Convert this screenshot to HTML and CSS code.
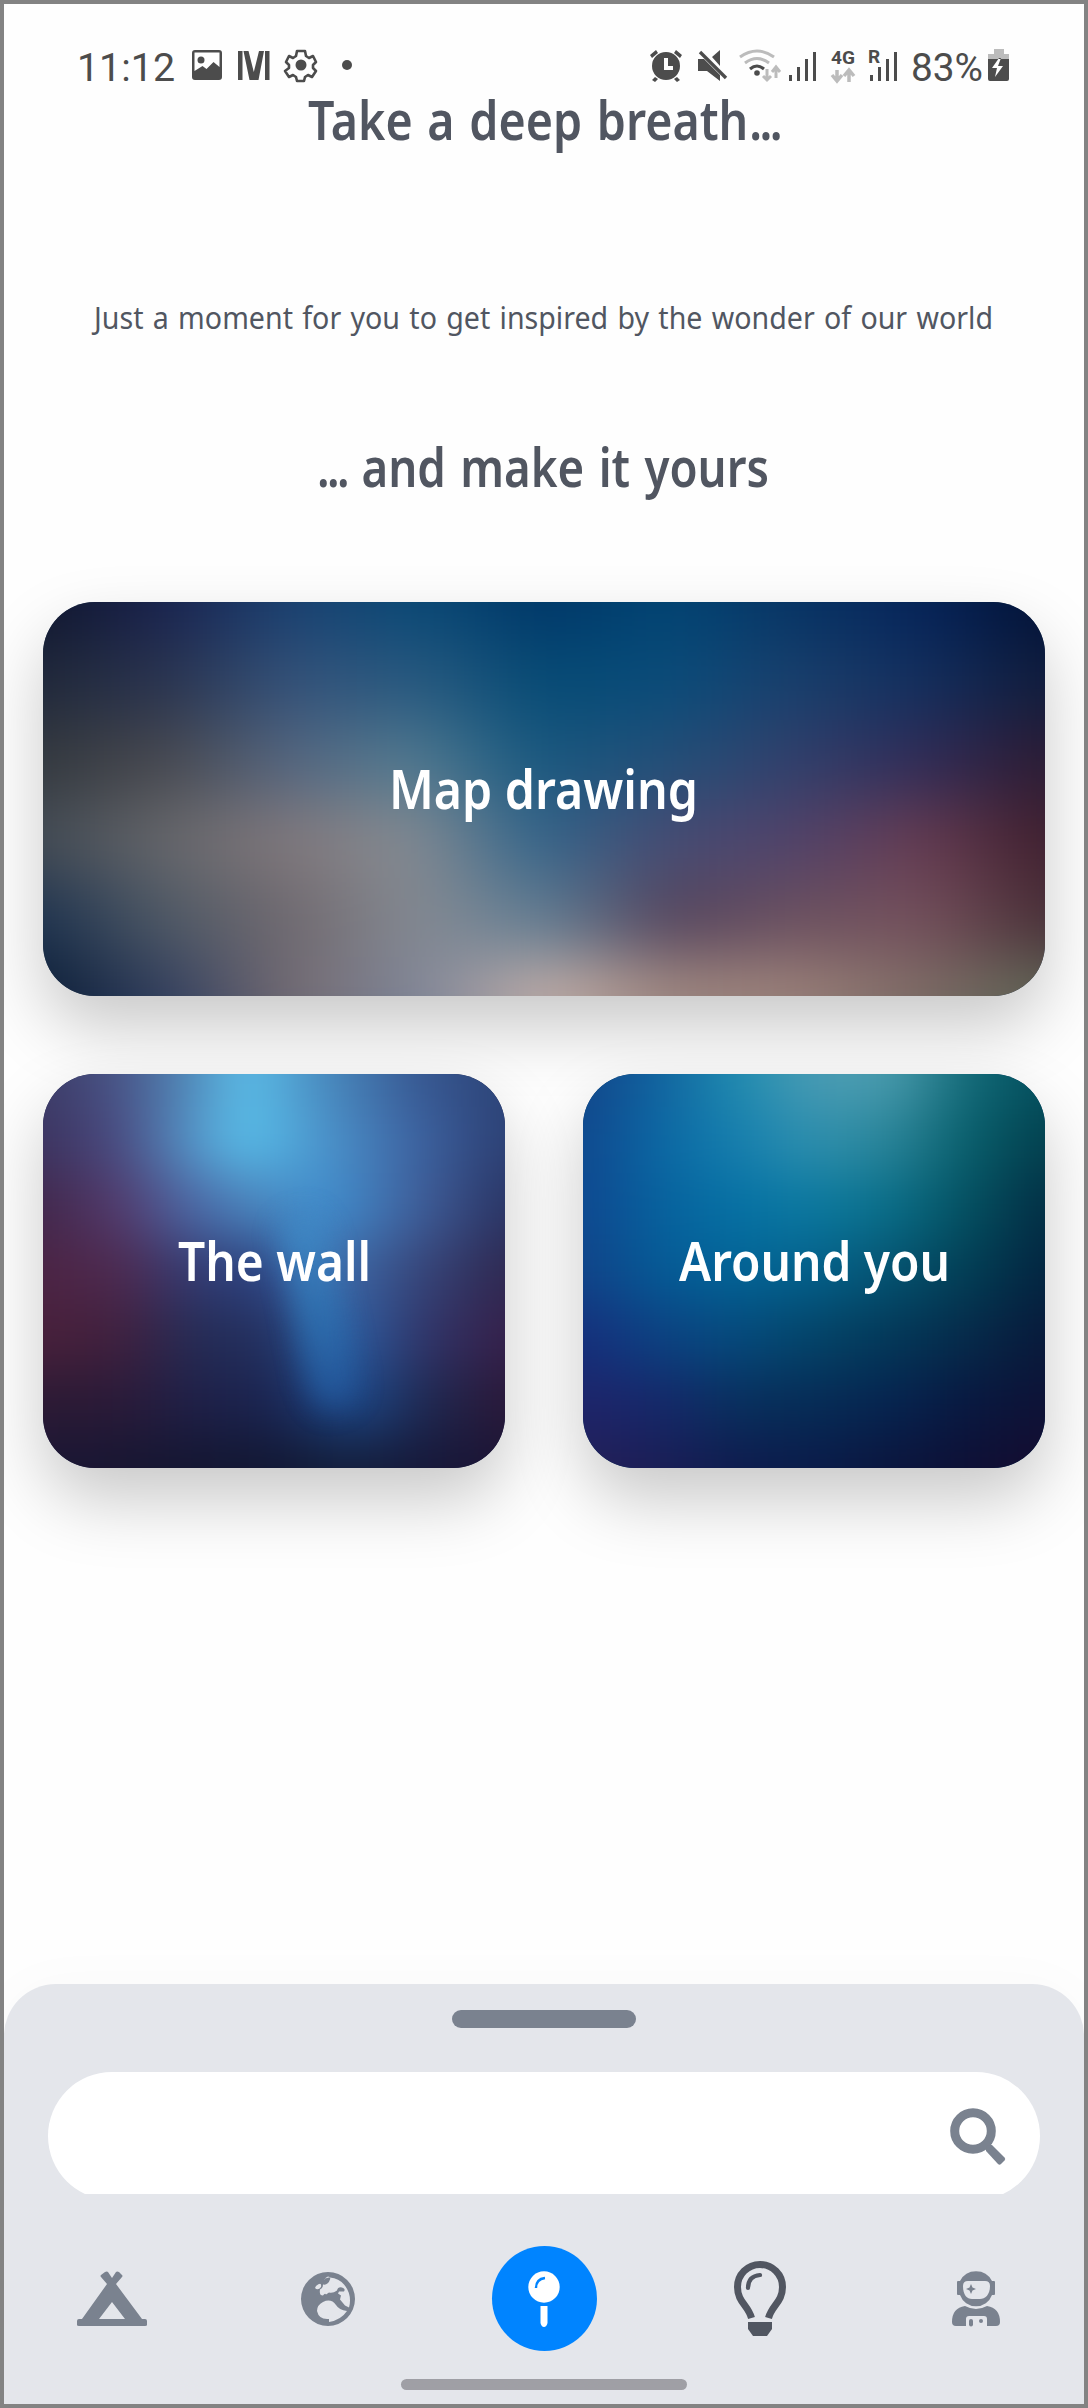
FILE: index.html
```html
<!DOCTYPE html>
<html lang="en">
<head>
<meta charset="utf-8">
<title>Take a deep breath</title>
<link rel="stylesheet" href="styles.css">
</head>
<body>
<div class="screen">
  <header class="status">
    <div class="status-left">
      <svg class="clock" width="99" height="36"><text x="0" y="32" textLength="98" lengthAdjust="spacingAndGlyphs">11:12</text></svg>
      <svg width="32" height="36" viewBox="0 0 32 36"><path fill-rule="evenodd" d="M4 1h24a3 3 0 0 1 3 3v24a3 3 0 0 1-3 3H4a3 3 0 0 1-3-3V4a3 3 0 0 1 3-3zM3.500 3.500V22l8-5 4 3 7-7 6 5V3.500z"/><circle cx="10" cy="11" r="3.500"/></svg>
      <svg width="32" height="36" viewBox="0 0 32 36"><path d="M0 2h4.500v29H0zM27 2h4.500v29H27zM5.500 2h5l5.300 21L21 2h5l-5.500 29h-9z"/></svg>
      <svg width="32" height="36" viewBox="0 0 32 36"><path fill="none" stroke="#4c4c4c" stroke-width="2.600" stroke-linejoin="round" d="M12 2h8l1 5 3 2 4-2 3 6-3 3v3l3 3-4 6-4-2-3 2-1 4h-7l-1-4-3-2-4 2-4-6 4-3v-3l-3-3 3-6 4 2 3-2z"/><circle cx="16" cy="16" r="5.500"/></svg>
      <svg class="dot" width="12" height="36"><circle cx="6" cy="16" r="5"/></svg>
    </div>
    <div class="status-right">
      <svg width="34" height="36" viewBox="0 0 34 36"><path d="M1 6l6-5 2 3-6 5zM33 6l-6-5-2 3 6 5zM6 28l3 2-3 3-3-2zM28 28l-3 2 3 3 3-2z"/><path fill-rule="evenodd" d="M17 3a14 14 0 1 1 0 28 14 14 0 0 1 0-28zm-2 6v12h9v-4h-5V9z"/></svg>
      <svg class="mute" width="30" height="36" viewBox="0 0 30 36"><path d="M0 10h6l16 16v6L9 22H0zM14 8l8-7v16z"/><path stroke="#4c4c4c" stroke-width="3.400" d="M2 3l26 26"/></svg>
      <svg class="wifi" width="42" height="36" viewBox="0 0 42 36"><g fill="none" stroke="#bcbcbc" stroke-width="3"><path d="M1 8q17-12 34 0M6 14q12-9 24 0"/><path stroke="#4c4c4c" d="M11 20q7-6 14 0"/><path d="M28 20v11m-4-4 4 4 4-4M37 29V18m-4 5 4-5 4 5"/></g><circle cx="18" cy="24" r="2.800"/></svg>
      <svg class="bars" width="28" height="36" viewBox="0 0 28 36"><path d="M0 26h3v6H0zM8 18h3v14H8zM16 10h3v22h-3zM24 3h3v29h-3z"/></svg>
      <svg class="net" width="26" height="36" viewBox="0 0 26 36"><text x="0" y="15" textLength="24" lengthAdjust="spacingAndGlyphs" class="tiny">4G</text><path fill="none" stroke="#bcbcbc" stroke-width="3.500" d="M6 21v10m-5-5 5 6 5-6M18 33V22m-5 5 5-6 5 6"/></svg>
      <svg class="roam" width="30" height="36" viewBox="0 0 30 36"><text x="0" y="14" class="tiny">R</text><path d="M2 26h3v6H2zM10 18h3v14h-3zM18 10h3v22h-3zM26 3h3v29h-3z"/></svg>
      <svg class="clock pct" width="72" height="36"><text x="0" y="32" textLength="72" lengthAdjust="spacingAndGlyphs">83%</text></svg>
      <svg width="22" height="36" viewBox="0 0 22 36"><path fill="#bcbcbc" d="M6 0h10v5h5v5H0V5h6z"/><path fill-rule="evenodd" d="M0 10h21v20q0 2-2 2H2q-2 0-2-2zM11 9L4 19h5L7 28l8-11h-5l3-8z"/></svg>
    </div>
  </header>

  <h1 class="title"><svg width="472" height="64"><text x="0" y="46" textLength="472" lengthAdjust="spacingAndGlyphs">Take a deep breath<tspan class="dots" dx="1">...</tspan></text></svg></h1>
  <p class="lead"><svg width="900" height="42"><text x="0" y="29" textLength="899" lengthAdjust="spacingAndGlyphs">Just a moment for you to get inspired by the wonder of our world</text></svg></p>
  <h2 class="title second"><svg width="454" height="64"><text x="0" y="46" textLength="452" lengthAdjust="spacingAndGlyphs"><tspan class="dots">...</tspan> and make it yours</text></svg></h2>

  <main class="cards">
    <a class="card map"><svg width="310" height="64"><text x="0" y="46" textLength="309" lengthAdjust="spacingAndGlyphs">Map drawing</text></svg></a>
    <a class="card wall"><svg width="194" height="64"><text x="1" y="46" textLength="193" lengthAdjust="spacingAndGlyphs">The wall</text></svg></a>
    <a class="card around"><svg width="270" height="64"><text x="0" y="46" textLength="271" lengthAdjust="spacingAndGlyphs">Around you</text></svg></a>
  </main>

  <footer class="sheet">
    <div class="handle"></div>
    <div class="search">
      <div class="pill">
        <svg width="56" height="56" viewBox="0 0 56 56"><circle cx="23" cy="23" r="18.300" fill="none" stroke="#7a828f" stroke-width="9"/><path d="M36 43q-1-7 6-6l12.500 12.500q1.500 1.500 0 3l-3.500 3.500q-1.500 1.500-3 0z"/></svg>
      </div>
    </div>
    <nav class="tabs">
      <a class="tab"><svg width="70" height="56" viewBox="0 0 70 56"><path fill-rule="evenodd" d="M24 4l4-3q2-1 3 0l4 6 4-6q1-1 3 0l3 3q1 1 0 2l-6 7 26 35h3q2 0 2 2v4q0 1-2 1H2q-2 0-2-1v-4q0-2 2-2h3l25-35-6-7q-1-1 0-2zM35 31L22 48h26z"/></svg></a>
      <a class="tab"><svg width="54" height="54" viewBox="0 0 54 54"><path fill-rule="evenodd" d="M27 0a27 27 0 1 1 0 54 27 27 0 0 1 0-54zM23 8q2-3 6-2.500 9 1 14 7 6 7 6 16 0 4-1 7l-4-2-5-6 1-4-3-2 1-2h5q2-3-2-4-4-1-5 3-4 3-8 2l-3 2q-1-2-3 1-4 0-3-6 3-1 3-5 5 1 7-5 1-3-2-3-3 1-3 3zM15 14q6-5 5 1-3 4-6 1zM16 39q0-6 6-9 8-4 13 3 3 5 11 6-6 9-18 11v-3q-10 1-12-8z"/></svg></a>
      <a class="tab active"><svg width="32" height="56" viewBox="0 0 32 56"><circle cx="16" cy="16" r="15.700"/><path d="M12.500 35h7v17q-1 4-3.500 4t-3.500-4z"/><path fill="none" stroke="#0084ff" stroke-width="2.400" d="M8 17q0-9 9-10"/></svg></a>
      <a class="tab"><svg class="bulb" width="52" height="76" viewBox="0 0 52 76"><path fill="none" stroke="#515661" stroke-width="7" d="M17.500 57C14 44 3.500 41 3.500 26a22.500 22.500 0 0 1 45 0C48.500 41 38 44 34.500 57"/><path fill="none" stroke="#515661" stroke-width="4.200" stroke-linecap="round" d="M14 27q0-12 12-13"/><path d="M14 61h24v7l-5 7H19l-5-7z"/></svg></a>
      <a class="tab"><svg width="48" height="56" viewBox="0 0 48 56"><path fill-rule="evenodd" d="M8 10a18 18 0 0 1 32 0h2q1 0 1 1v12q0 1-1 1h-2a17 17 0 0 1-32 0H6q-1 0-1-1V11q0-1 1-1zM16 10q-5 0-5 5c0 9 4 13 9 13h8c5 0 10-4 10-13q0-5-5-5zM19 13l1.500 3.500L24 18l-3.500 1.500L19 23l-1.500-3.500L14 18l3.500-1.500zM13 35q11 6 22 0 13 2 13 16 0 4-4 4H35V48q0-3-3-3H17q-3 0-3 3v7H4q-4 0-4-4 0-14 13-16z"/><rect x="17" y="48" width="4" height="7.500" rx="2"/><circle cx="29" cy="50" r="2"/></svg></a>
    </nav>
    <div class="home"></div>
  </footer>
</div>
</body>
</html>
```
FILE: styles.css
```css
* { box-sizing: border-box; }
body { margin: 0; background: #fff; }
svg { display: block; overflow: visible; }

.screen {
  width: 1088px;
  height: 2408px;
  border: 4px solid #838383;
  background: #fefefe;
  display: flex;
  flex-direction: column;
  overflow: hidden;
  font-family: "Noto Sans", "Open Sans", sans-serif;
}

/* status bar */
.status {
  margin-top: 45px;
  padding: 0 74px 0 73px;
  height: 36px;
  display: flex;
  justify-content: space-between;
  fill: #4c4c4c;
}
.status-left { display: flex; gap: 15px; }
.status-left .dot { margin-left: 9px; }
.status-right { display: flex; }
.clock { font-family: Roboto, sans-serif; font-size: 39px; }
.tiny { font-family: Roboto, sans-serif; font-size: 19px; font-weight: 700; }
.mute { margin-left: 15px; }
.wifi { margin-left: 11px; }
.bars { margin-left: 8px; }
.net { margin-left: 14px; }
.roam { margin-left: 11px; }
.pct { margin: 0 5px 0 13px; }

/* headings */
.title, .lead { display: flex; justify-content: center; fill: #515661; }
.title { margin: 9px 0 0; font-size: 54px; font-weight: 600; word-spacing: 3px; }
.title.second { margin-top: 99px; }
.lead { margin: 142px 0 0; font-size: 31px; word-spacing: 2px; }
.dots { letter-spacing: -3px; }

/* cards */
.cards {
  margin: 97px 39px 0;
  display: grid;
  grid-template-columns: 1fr 1fr;
  grid-auto-rows: 394px;
  gap: 78px;
}
.card {
  position: relative;
  display: flex;
  justify-content: center;
  padding-top: 161px;
  border-radius: 52px;
  overflow: hidden;
  isolation: isolate;
  box-shadow: 0 32px 68px rgba(0, 0, 0, .21);
  fill: #fff;
  font-size: 54px;
  font-weight: 600;
}
.map { grid-column: 1 / -1; }

/* soft colour fields: each layer is one band, blurred into the next */
.card::before {
  content: "";
  position: absolute;
  inset: -60px;
  z-index: -1;
  background-repeat: no-repeat;
  filter: blur(25px);
}
.map { background: #2c4058; }
.map::before {
  filter: blur(31px);
  background-image:
    linear-gradient(90deg, #10162e 60px, #1b2450, #1b4272, #0a4a76, #003768, #024574, #083464, #06245a, #021236 calc(100% - 60px)),
    linear-gradient(90deg, #20283a 60px, #2a3450, #34527a, #27597f, #054a74, #0a4c7a, #193f6c, #132f5e, #101c3c calc(100% - 60px)),
    linear-gradient(90deg, #34393f 60px, #47484f, #54657f, #527a90 38%, #18587f, #224f78, #31406c, #302c58, #2c1c34 calc(100% - 60px)),
    linear-gradient(90deg, #444c55 60px, #66676b, #81787c, #858b92 38%, #33658a, #454c74, #50426a, #663c52, #40202f calc(100% - 60px)),
    linear-gradient(90deg, #1f3450 60px, #505a66, #716a70, #858a92, #607c92, #55455e, #6b505f, #74505c, #4a3038 calc(100% - 60px)),
    linear-gradient(90deg, #0d1f38 60px, #334060, #756c73, #7f8699, #c4b0aa, #a08880, #9c827a, #7e6c66, #5e6454 calc(100% - 60px));
  background-size: 100% 99px, 100% 178px, 100% 257px, 100% 336px, 100% 415px, 100% 100%;
}
.wall::before, .around::before {
  background-size: 100% 93px, 100% 159px, 100% 225px, 100% 290px, 100% 356px, 100% 421px, 100% 100%;
}
.wall { background: #252c54; }
.wall::before {
  background-image:
    linear-gradient(90deg, #3c3c68 60px, #4a5588, #5290c0 37%, #5cc0ea 45%, #4a8cc0 58%, #385a94, #2d4478 calc(100% - 60px)),
    linear-gradient(90deg, #3c3460 60px, #4a4a80, #5494c8 36%, #58c0ea 45%, #4a8fc8 60%, #3d62a0, #2c4074 calc(100% - 60px)),
    linear-gradient(90deg, #42284c 60px, #533a6c, #4c68a6 36%, #4a84bc 46%, #4090d0 59%, #40609c, #2a3464 calc(100% - 60px)),
    linear-gradient(90deg, #4c2444 60px, #4e2a50, #323c74 37%, #2c4280 48%, #4072b2 58%, #37487e, #2f2850 calc(100% - 60px)),
    linear-gradient(90deg, #48203a 60px, #40203e, #242c56, #233060 50%, #2c66ac 60%, #303468 76%, #36204a calc(100% - 60px)),
    linear-gradient(90deg, #2c1a34 60px, #2a1a38, #1e2048, #1a2450 50%, #1c4a8c 63%, #1e2850 76%, #2a1838 calc(100% - 60px)),
    linear-gradient(90deg, #1a1634 60px, #181632, #141632, #121834, #14203e, #16183a, #1c1434 calc(100% - 60px));
}
.wall::after {
  content: "";
  position: absolute;
  z-index: -1;
  left: 252px;
  top: 140px;
  width: 46px;
  height: 195px;
  border-radius: 22px;
  background: linear-gradient(#4291cc, #2f78b8 50%, #2359a0);
  filter: blur(14px);
  opacity: .7;
  transform: rotate(-11deg);
}
.around { background: #063a62; }
.around::before {
  background-image:
    linear-gradient(90deg, #12468a 60px, #1164a0, #1f8cb0, #4b9cb4, #4a9cae, #126a78, #03505e calc(100% - 60px)),
    linear-gradient(90deg, #10488e 60px, #0b68a4, #167fae, #2f90ae, #2a8498, #085f6c, #03404e calc(100% - 60px)),
    linear-gradient(90deg, #0f4890 60px, #07629e, #0671a4, #0c7aa0, #0a6e88, #045060, #032e44 calc(100% - 60px)),
    linear-gradient(90deg, #114388 60px, #055a96, #036496, #04608a, #055370, #023e54, #032440 calc(100% - 60px)),
    linear-gradient(90deg, #162f7c 60px, #0c4282, #054a7c, #044468, #033858, #062a4a, #08193a calc(100% - 60px)),
    linear-gradient(90deg, #1e246a 60px, #15286a, #08305e, #062c56, #062450, #081840, #0e1236 calc(100% - 60px)),
    linear-gradient(90deg, #241f58 60px, #1b1e56, #0e1c4e, #0a1c4a, #0b163e, #0e1036, #150c30 calc(100% - 60px));
}

/* bottom sheet */
.sheet {
  margin-top: auto;
  height: 420px;
  padding-top: 26px;
  border-radius: 52px 52px 0 0;
  background: #e4e6eb;
  box-shadow: 0 0 60px rgba(0, 0, 0, .025);
  display: flex;
  flex-direction: column;
  align-items: center;
}
.handle { width: 184px; height: 18px; border-radius: 9px; background: #7a828f; }
.search { margin-top: 44px; width: 992px; height: 122px; overflow: hidden; }
.pill {
  height: 128px;
  padding: 36px 34px 0 0;
  border-radius: 64px;
  background: #fff;
  display: flex;
  justify-content: flex-end;
  fill: #7a828f;
}
.tabs {
  margin-top: 52px;
  width: 1080px;
  display: grid;
  grid-template-columns: repeat(5, 216px);
  height: 105px;
  fill: #7a828f;
}
.tab { display: flex; align-items: center; justify-content: center; }
.tab.active { justify-self: center; width: 105px; border-radius: 50%; background: #0084ff; fill: #fff; }
.bulb { fill: #515661; }
.home { margin-top: 28px; width: 286px; height: 11px; border-radius: 6px; background: #9f9fa5; }
```
